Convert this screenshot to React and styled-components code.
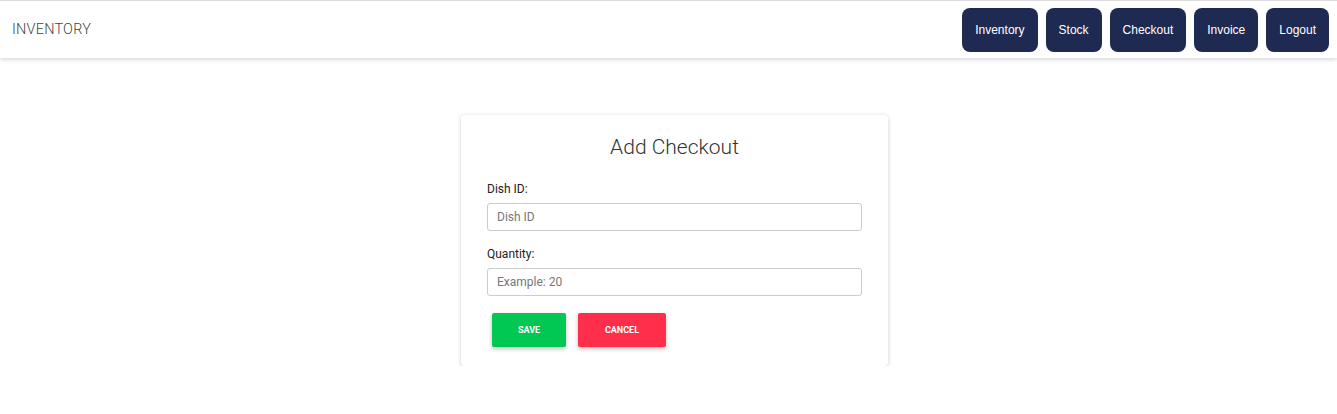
import React from 'react';
import styled, { createGlobalStyle } from 'styled-components';

const GlobalStyle = createGlobalStyle`
  body {
    margin: 0;
    background: #fff;
    font-family: Roboto, "Liberation Sans", sans-serif;
  }
`

const Header = styled.header`
  height: 57px;
  border-top: 1px solid #dcdcdc;
  display: flex;
  align-items: center;
  justify-content: space-between;
  padding: 0 8px 0 12px;
  box-shadow: 0 2px 4px rgba(0, 0, 0, 0.15);
  background: #fff;
`

const Brand = styled.div`
  font-family: Roboto, sans-serif;
  font-weight: 300;
  font-size: 14.5px;
  color: #444;
  letter-spacing: 0.2px;
`

const Nav = styled.nav`
  display: flex;
  gap: 8px;
`

const NavButton = styled.button`
  height: 44px;
  padding: 0 13px;
  border: none;
  border-radius: 8px;
  background: #1f2a52;
  color: #fff;
  font-family: "Liberation Sans", Arial, sans-serif;
  font-size: 12px;
  cursor: pointer;
`

const Main = styled.main`
  display: flex;
  justify-content: center;
  padding: 57px 0 0 12px;
`

const Card = styled.div`
  width: 427px;
  box-sizing: border-box;
  padding: 20px 26px 19px;
  border-radius: 4px;
  background: #fff;
  box-shadow: 0 1px 4px rgba(0, 0, 0, 0.2);
`

const Title = styled.h2`
  margin: 0 0 23px;
  text-align: center;
  font-weight: 300;
  font-size: 21px;
  color: #333;
`

const Field = styled.div`
  display: flex;
  flex-direction: column;
  margin-bottom: 16px;
`

const Label = styled.label`
  font-size: 12px;
  color: #222;
  margin-bottom: 7px;
`

const Input = styled.input`
  height: 28px;
  box-sizing: border-box;
  border: 1px solid #ccc;
  border-radius: 3px;
  padding: 0 9px;
  font-family: Roboto, sans-serif;
  font-size: 12px;
  color: #333;
  &::placeholder { color: #777; }
`

const Actions = styled.div`
  display: flex;
  gap: 12px;
  padding: 1px 5px 0;
`

const ActionButton = styled.button`
  height: 34px;
  width: ${p => p.$w}px;
  border: none;
  border-radius: 2px;
  background: ${p => p.$bg};
  color: #fff;
  font-family: Roboto, sans-serif;
  font-weight: 700;
  font-size: 9px;
  box-shadow: 0 2px 4px rgba(0, 0, 0, 0.25);
  cursor: pointer;
`

const links = ['Inventory', 'Stock', 'Checkout', 'Invoice', 'Logout']

export default function App() {
  return (
    <>
      <GlobalStyle />
      <Header>
        <Brand>INVENTORY</Brand>
        <Nav>
          {links.map(l => <NavButton key={l}>{l}</NavButton>)}
        </Nav>
      </Header>
      <Main>
        <Card>
          <Title>Add Checkout</Title>
          <Field>
            <Label>Dish ID:</Label>
            <Input placeholder="Dish ID" />
          </Field>
          <Field>
            <Label>Quantity:</Label>
            <Input placeholder="Example: 20" />
          </Field>
          <Actions>
            <ActionButton $w={74} $bg="#00c853">SAVE</ActionButton>
            <ActionButton $w={88} $bg="#ff2e4b">CANCEL</ActionButton>
          </Actions>
        </Card>
      </Main>
    </>
  )
}
